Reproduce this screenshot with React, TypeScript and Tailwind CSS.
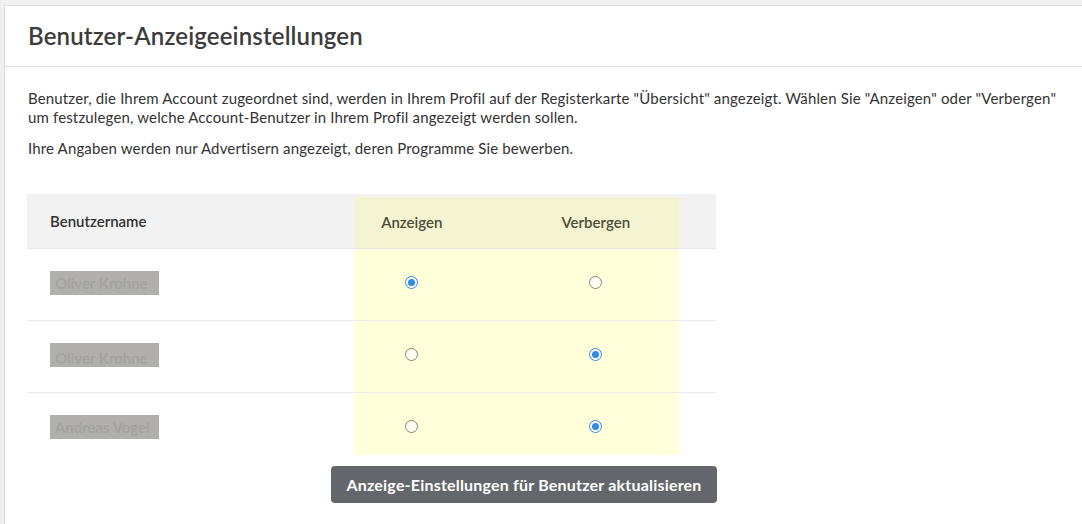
const users = [
  { name: "Oliver Krohne", show: true, shift: false },
  { name: "Oliver Krohne", show: false, shift: true },
  { name: "Andreas Vogel", show: false, shift: false },
];

function Radio({ checked }: { checked: boolean }) {
  if (checked) {
    return (
      <span className="flex h-[13px] w-[13px] items-center justify-center rounded-full border border-[#2f8ae0] bg-white">
        <span className="h-[7px] w-[7px] rounded-full bg-[#2f8ae0]" />
      </span>
    );
  }
  return <span className="block h-[13px] w-[13px] rounded-full border border-[#85857a] bg-[#fffff4]" />;
}

export default function App() {
  return (
    <div className="min-h-[524px] bg-[#f0f0f0] pl-[4px] pt-[5px] font-['Lato',sans-serif] text-[#333]">
      <div className="h-[519px] border-l border-t border-[#dedede] bg-white">
        <div className="flex h-[61px] items-center border-b border-[#e0e0e0] pl-[23px]">
          <h1 className="text-[24px] font-semibold tracking-[0.15px] text-[#3c3c3c]">
            Benutzer-Anzeigeeinstellungen
          </h1>
        </div>

        <div className="pl-[23px] pr-[10px] pt-[22px] text-[15px] leading-[19px] tracking-[0.15px]">
          <p className="whitespace-nowrap">
            Benutzer, die Ihrem Account zugeordnet sind, werden in Ihrem Profil auf der Registerkarte "Übersicht" angezeigt. Wählen Sie "Anzeigen" oder "Verbergen"
            <br />
            um festzulegen, welche Account-Benutzer in Ihrem Profil angezeigt werden sollen.
          </p>
          <p className="mt-[12px]">Ihre Angaben werden nur Advertisern angezeigt, deren Programme Sie bewerben.</p>

          <div className="ml-[-1px] mt-[36px] w-[689px] tracking-normal">
            <div className="grid h-[55px] grid-cols-[327px_325px_37px] border-b border-[#e6e6e6] bg-[#f2f2f2] text-[15px] font-semibold">
              <div className="flex items-center pl-[23px]">Benutzername</div>
              <div className="mt-[3px] flex items-center bg-[#f4f4d2] text-[#4d4c38]">
                <div className="flex w-[118px] justify-center">Anzeigen</div>
                <div className="ml-[43px] flex w-[170px] justify-center">Verbergen</div>
              </div>
              <div />
            </div>

            {users.map((u, i) => (
              <div
                key={i}
                className={
                  i < users.length - 1
                    ? "grid h-[72px] grid-cols-[327px_325px_37px] border-b border-[#ebebeb]"
                    : "grid h-[62px] grid-cols-[327px_325px_37px]"
                }
              >
                <div className="pl-[23px] pt-[22px]">
                  <div
                    className={
                      u.shift
                        ? "h-[24px] w-[109px] overflow-hidden bg-[#b0afae] pl-[5px] pt-[5px] text-[15px] font-semibold leading-[20px] text-[#a3a2a1]"
                        : "h-[24px] w-[109px] overflow-hidden bg-[#b0afae] pl-[5px] pt-[2px] text-[15px] font-semibold leading-[20px] text-[#a3a2a1]"
                    }
                  >
                    {u.name}
                  </div>
                </div>
                <div className="flex items-start bg-[#ffffd9] pt-[27px]">
                  <div className="flex w-[118px] justify-center">
                    <Radio checked={u.show} />
                  </div>
                  <div className="ml-[43px] flex w-[170px] justify-center">
                    <Radio checked={!u.show} />
                  </div>
                </div>
                <div />
              </div>
            ))}
          </div>

          <div className="mt-[11px] flex w-[689px] justify-end tracking-normal">
            <button
              type="button"
              className="h-[37px] w-[386px] rounded-[4px] bg-[#63666a] text-[16px] font-bold tracking-[0.2px] text-white"
            >
              Anzeige-Einstellungen für Benutzer aktualisieren
            </button>
          </div>
        </div>
      </div>
    </div>
  );
}
